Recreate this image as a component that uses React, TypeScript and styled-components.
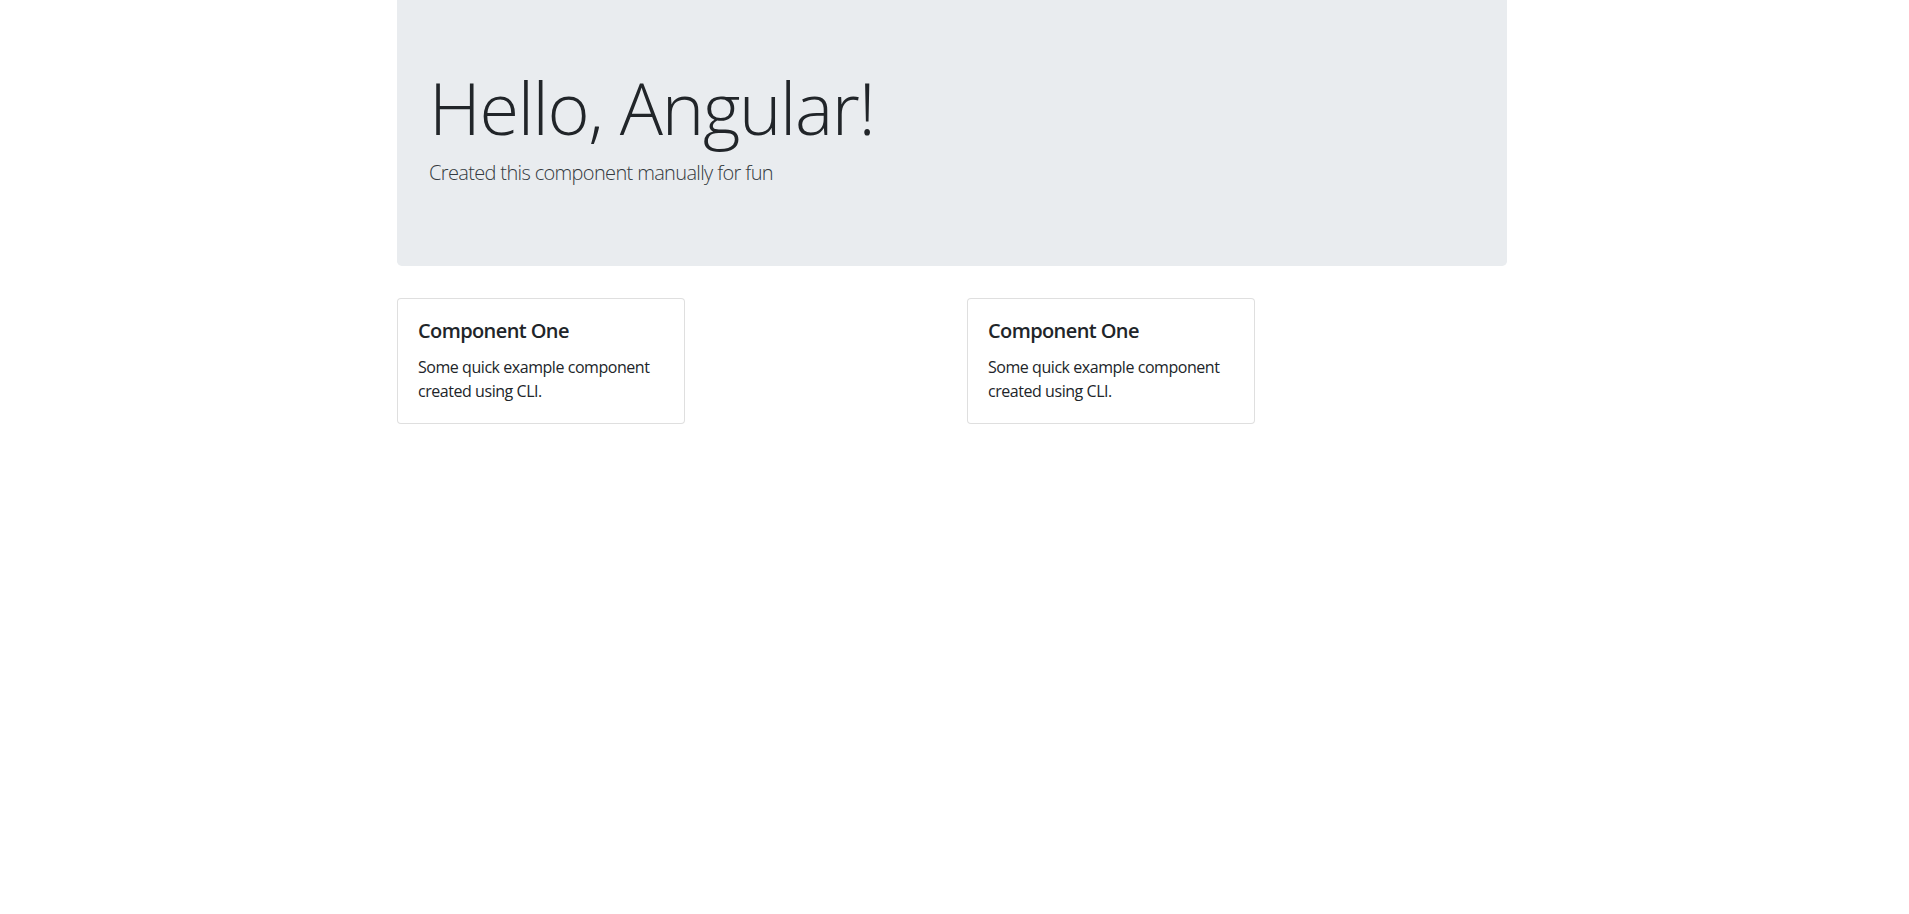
import React from "react";
import styled, { createGlobalStyle } from "styled-components";

const GlobalStyle = createGlobalStyle`
  * { box-sizing: border-box; }
  html, body { margin: 0; padding: 0; background: #fff; }
  body {
    font-family: "Open Sans", "Noto Sans", "Liberation Sans", sans-serif;
    font-size: 16px;
    line-height: 1.5;
    color: #212529;
  }
`;

const Container = styled.div`
  width: 1110px;
  margin-left: calc((100% - 1115px) / 2);
`;

const Jumbotron = styled.div`
  background: #e9ecef;
  border-radius: 0 0 4.8px 4.8px;
  padding: 64px 32px 62px;
  margin-bottom: 32px;
`;

const Display = styled.h1`
  margin: 0 0 8px;
  font-size: 72px;
  font-weight: 300;
  line-height: 1.2;
  letter-spacing: -1.35px;
  color: #212529;
`;

const Lead = styled.p`
  margin: 0 0 16px;
  font-size: 20px;
  font-weight: 300;
  line-height: 1.5;
  letter-spacing: -0.65px;
  color: #343a40;
`;

const Row = styled.div`
  display: grid;
  grid-template-columns: 570px 540px;
`;

const Card = styled.div`
  width: 288px;
  border: 1px solid rgba(0, 0, 0, 0.125);
  border-radius: 4px;
  background: #fff;
  padding: 20px;
`;

const CardTitle = styled.h5`
  margin: 0 0 12px;
  font-size: 20px;
  font-weight: 600;
  line-height: 1.2;
  letter-spacing: -0.6px;
  color: #212529;
`;

const CardText = styled.p`
  margin: 0;
  font-size: 16px;
  line-height: 1.5;
  letter-spacing: -0.45px;
`;

const cards = [
  { title: "Component One", text: "Some quick example component created using CLI." },
  { title: "Component One", text: "Some quick example component created using CLI." },
];

export default function App() {
  return (
    <>
      <GlobalStyle />
      <Container>
        <Jumbotron>
          <Display>Hello, Angular!</Display>
          <Lead>Created this component manually for fun</Lead>
        </Jumbotron>
        <Row>
          {cards.map((c, i) => (
            <Card key={i}>
              <CardTitle>{c.title}</CardTitle>
              <CardText>{c.text}</CardText>
            </Card>
          ))}
        </Row>
      </Container>
    </>
  );
}
